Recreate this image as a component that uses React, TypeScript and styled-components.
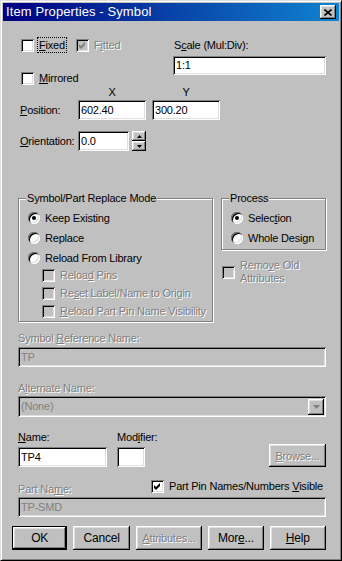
import React from "react";
import styled, { createGlobalStyle } from "styled-components";

const GlobalStyle = createGlobalStyle`
  html, body {
    margin: 0;
    padding: 0;
    background: #c0c0c0;
  }
  body {
    font-family: "Liberation Sans", Arial, sans-serif;
    font-size: 11px;
    letter-spacing: -0.2px;
    color: #000;
  }
  * {
    box-sizing: border-box;
  }
`;

const Window = styled.div`
  width: 342px;
  height: 561px;
  background: #c0c0c0;
  border: 1px solid;
  border-color: #dfdfdf #000 #000 #dfdfdf;
  box-shadow: inset 1px 1px #fff, inset -1px -1px #808080;
  padding: 2px;
  display: flex;
  flex-direction: column;
`;

const TitleBar = styled.div`
  height: 18px;
  flex: none;
  display: flex;
  align-items: center;
  justify-content: space-between;
  padding: 0 3px 0 3px;
  background: linear-gradient(90deg, #000080, #1084d0);
`;

const TitleText = styled.span`
  color: #fff;
  font-size: 13px;
  line-height: 18px;
  letter-spacing: 0.1px;
`;

const CloseButton = styled.div`
  width: 16px;
  height: 14px;
  display: flex;
  align-items: center;
  justify-content: center;
  background: #c0c0c0;
  box-shadow: inset -1px -1px #000, inset 1px 1px #fff, inset -2px -2px #808080,
    inset 2px 2px #dfdfdf;
`;

const Body = styled.div`
  display: flex;
  flex-direction: column;
  padding: 0 13px 0 15px;
`;

const TopSection = styled.div`
  display: grid;
  grid-template-columns: 155px 1fr;
  height: 65px;
`;

const LeftCol = styled.div`
  display: flex;
  flex-direction: column;
  gap: 17px;
  padding-top: 16px;
`;

const RightCol = styled.div`
  display: flex;
  flex-direction: column;
  padding-top: 18px;
`;

const CheckLine = styled.div`
  display: grid;
  grid-template-columns: 55px auto;
  padding-left: 3px;
`;

const CheckRow = styled.div<{ $height?: number; $indent?: number }>`
  display: flex;
  align-items: center;
  height: ${(p) => p.$height ?? 16}px;
  padding-left: ${(p) => p.$indent ?? 0}px;
`;

const Box = styled.span<{ $disabled?: boolean }>`
  flex: none;
  width: 13px;
  height: 13px;
  display: flex;
  align-items: center;
  justify-content: center;
  background: ${(p) => (p.$disabled ? "#c0c0c0" : "#fff")};
  box-shadow: inset 1px 1px #808080, inset -1px -1px #fff, inset 2px 2px #000,
    inset -2px -2px #dfdfdf;
`;

const RadioDot = styled.span<{ $on?: boolean }>`
  flex: none;
  width: 12px;
  height: 12px;
  border-radius: 50%;
  display: flex;
  align-items: center;
  justify-content: center;
  background: #fff;
  box-shadow: inset 1px 1px #808080, inset -1px -1px #fff, inset 2px 2px #000,
    inset -2px -2px #dfdfdf;

  &::after {
    content: "";
    width: 4px;
    height: 4px;
    border-radius: 50%;
    background: ${(p) => (p.$on ? "#000" : "transparent")};
  }
`;

const Text = styled.span<{ $disabled?: boolean; $gap?: number }>`
  line-height: 13px;
  white-space: nowrap;
  margin-left: ${(p) => p.$gap ?? 0}px;
  color: ${(p) => (p.$disabled ? "#808080" : "#000")};
  text-shadow: ${(p) => (p.$disabled ? "1px 1px 0 #fff" : "none")};
`;

const Focus = styled.span`
  outline: 1px dotted #000;
  outline-offset: 1px;
`;

const Field = styled.div<{ $width?: number; $height?: number; $disabled?: boolean }>`
  width: ${(p) => (p.$width ? `${p.$width}px` : "100%")};
  height: ${(p) => p.$height ?? 20}px;
  flex: none;
  display: flex;
  align-items: center;
  padding: 0 2px 0 3px;
  background: ${(p) => (p.$disabled ? "#c0c0c0" : "#fff")};
  color: ${(p) => (p.$disabled ? "#808080" : "#000")};
  box-shadow: inset 1px 1px #808080, inset -1px -1px #fff, inset 2px 2px #000,
    inset -2px -2px #dfdfdf;
  white-space: nowrap;
  line-height: 13px;
`;

const AxisRow = styled.div`
  display: grid;
  grid-template-columns: 60px 68px 6px 68px;
  height: 13px;
  line-height: 13px;
  text-align: center;
`;

const FormRow = styled.div<{ $top: number }>`
  display: grid;
  grid-template-columns: 60px 68px 6px 68px;
  align-items: center;
  height: 20px;
  margin-top: ${(p) => p.$top}px;
`;

const RowLabel = styled.span`
  padding-left: 2px;
  line-height: 13px;
`;

const SpinRow = styled.div`
  display: flex;
  align-items: center;
`;

const Spinner = styled.div`
  display: flex;
  flex-direction: column;
  margin-left: 3px;
  width: 16px;
  height: 20px;
`;

const RaisedSmall = styled.div<{ $height: number }>`
  height: ${(p) => p.$height}px;
  display: flex;
  align-items: center;
  justify-content: center;
  background: #c0c0c0;
  box-shadow: inset -1px -1px #000, inset 1px 1px #fff, inset -2px -2px #808080,
    inset 2px 2px #dfdfdf;
`;

const GroupsRow = styled.div`
  display: flex;
  gap: 8px;
  margin-top: 47px;
  align-items: flex-start;
`;

const Group = styled.div<{ $width: number }>`
  position: relative;
  width: ${(p) => p.$width}px;
  border: 1px solid #808080;
  box-shadow: inset 1px 1px #fff, 1px 1px #fff;
  padding: 9px 0 1px 9px;
  display: flex;
  flex-direction: column;
`;

const GroupTitle = styled.span`
  position: absolute;
  left: 7px;
  top: -7px;
  padding: 0 1px 0 1px;
  background: #c0c0c0;
  line-height: 13px;
`;

const SubList = styled.div`
  display: flex;
  flex-direction: column;
  margin-top: -2px;
`;

const SideCol = styled.div`
  display: flex;
  flex-direction: column;
`;

const RemoveRow = styled.div`
  display: flex;
  align-items: center;
  margin-top: 9px;
  padding-left: 1px;
`;

const FieldLabel = styled(Text)<{ $top: number }>`
  display: block;
  margin-top: ${(p) => p.$top}px;
`;

const FieldWrap = styled.div<{ $top: number }>`
  margin-top: ${(p) => p.$top}px;
`;

const ComboArrow = styled.div`
  margin-left: auto;
  width: 16px;
  height: 16px;
  display: flex;
  align-items: center;
  justify-content: center;
  background: #c0c0c0;
  box-shadow: inset -1px -1px #000, inset 1px 1px #fff, inset -2px -2px #808080,
    inset 2px 2px #dfdfdf;
`;

const NameRow = styled.div`
  display: grid;
  grid-template-columns: 89px 10px 28px 1fr 57px;
  grid-template-rows: 13px 20px;
  row-gap: 3px;
  margin-top: 14px;
`;

const BrowseCell = styled.div`
  grid-column: 5;
  grid-row: 1 / 3;
  align-self: start;
  margin-top: 13px;
`;

const PartRow = styled.div`
  display: grid;
  grid-template-columns: 133px auto;
  height: 29px;
`;

const PartLabel = styled(Text)`
  align-self: end;
`;

const PartCheck = styled.div`
  display: flex;
  align-items: center;
  height: 16px;
  margin-top: 11px;
`;

const ButtonRow = styled.div`
  display: flex;
  gap: 6px;
  margin: 9px 0 0 -6px;
`;

const Button = styled.div<{ $width: number; $height?: number; $default?: boolean; $disabled?: boolean; $small?: boolean }>`
  width: ${(p) => p.$width}px;
  height: ${(p) => p.$height ?? 24}px;
  display: flex;
  align-items: center;
  justify-content: center;
  background: #c0c0c0;
  color: ${(p) => (p.$disabled ? "#808080" : "#000")};
  text-shadow: ${(p) => (p.$disabled ? "1px 1px 0 #fff" : "none")};
  font-size: ${(p) => (p.$small ? 11 : 12)}px;
  box-shadow: ${(p) =>
    p.$default
      ? "inset 1px 1px #000, inset -1px -1px #000, inset -2px -2px #000, inset 2px 2px #fff, inset -3px -3px #808080, inset 3px 3px #dfdfdf"
      : "inset -1px -1px #000, inset 1px 1px #fff, inset -2px -2px #808080, inset 2px 2px #dfdfdf"};
`;

const Check = ({ color = "#000" }: { color?: string }) => (
  <svg width="7" height="7" viewBox="0 0 7 7">
    <path d="M0 2 L2 4 L6 0 L6 3 L2 7 L0 5 Z" fill={color} />
  </svg>
);

const Tri = ({ up, color = "#000" }: { up?: boolean; color?: string }) => (
  <svg width="5" height="3" viewBox="0 0 5 3">
    <path d={up ? "M2.5 0 L5 3 L0 3 Z" : "M0 0 L5 0 L2.5 3 Z"} fill={color} />
  </svg>
);

export default function App() {
  return (
    <Window>
      <GlobalStyle />
      <TitleBar>
        <TitleText>Item Properties - Symbol</TitleText>
        <CloseButton>
          <svg width="8" height="7" viewBox="0 0 8 7">
            <path d="M0.5 0.5 L7.5 6.5 M7.5 0.5 L0.5 6.5" stroke="#000" strokeWidth="1.6" />
          </svg>
        </CloseButton>
      </TitleBar>
      <Body>
        <TopSection>
          <LeftCol>
            <CheckLine>
              <CheckRow>
                <Box />
                <Text $gap={5}>
                  <Focus>
                    <u>F</u>ixed
                  </Focus>
                </Text>
              </CheckRow>
              <CheckRow>
                <Box $disabled>
                  <Check color="#808080" />
                </Box>
                <Text $gap={5} $disabled>
                  F<u>i</u>tted
                </Text>
              </CheckRow>
            </CheckLine>
            <CheckRow $indent={3}>
              <Box />
              <Text $gap={5}>
                <u>M</u>irrored
              </Text>
            </CheckRow>
          </LeftCol>
          <RightCol>
            <Text $gap={1}>
              S<u>c</u>ale (Mul:Div):
            </Text>
            <FieldWrap $top={4}>
              <Field $height={19}>1:1</Field>
            </FieldWrap>
          </RightCol>
        </TopSection>

        <AxisRow>
          <span />
          <span>X</span>
          <span />
          <span>Y</span>
        </AxisRow>
        <FormRow $top={1}>
          <RowLabel>
            <u>P</u>osition:
          </RowLabel>
          <Field>602.40</Field>
          <span />
          <Field>300.20</Field>
        </FormRow>
        <FormRow $top={11}>
          <RowLabel>
            <u>O</u>rientation:
          </RowLabel>
          <SpinRow>
            <Field $width={51}>0.0</Field>
            <Spinner>
              <RaisedSmall $height={10}>
                <Tri up />
              </RaisedSmall>
              <RaisedSmall $height={10}>
                <Tri />
              </RaisedSmall>
            </Spinner>
          </SpinRow>
        </FormRow>

        <GroupsRow>
          <Group $width={195}>
            <GroupTitle>Symbol/Part Replace Mode</GroupTitle>
            <CheckRow $height={20}>
              <RadioDot $on />
              <Text $gap={5}>Keep Existing</Text>
            </CheckRow>
            <CheckRow $height={20}>
              <RadioDot />
              <Text $gap={5}>Replace</Text>
            </CheckRow>
            <CheckRow $height={20}>
              <RadioDot />
              <Text $gap={5}>Reload From Library</Text>
            </CheckRow>
            <SubList>
              <CheckRow $height={18} $indent={14}>
                <Box $disabled />
                <Text $gap={5} $disabled>
                  Reloa<u>d</u> Pins
                </Text>
              </CheckRow>
              <CheckRow $height={18} $indent={14}>
                <Box $disabled />
                <Text $gap={5} $disabled>
                  Re<u>s</u>et Label/Name to Origin
                </Text>
              </CheckRow>
              <CheckRow $height={18} $indent={14}>
                <Box $disabled />
                <Text $gap={5} $disabled>
                  <u>R</u>eload Part Pin Name Visibility
                </Text>
              </CheckRow>
            </SubList>
          </Group>
          <SideCol>
            <Group $width={105}>
              <GroupTitle>Process</GroupTitle>
              <CheckRow $height={20}>
                <RadioDot $on />
                <Text $gap={5}>
                  Selec<u>t</u>ion
                </Text>
              </CheckRow>
              <CheckRow $height={20}>
                <RadioDot />
                <Text $gap={5}>Whole Design</Text>
              </CheckRow>
            </Group>
            <RemoveRow>
              <Box $disabled />
              <Text $gap={5} $disabled>
                Remo<u>v</u>e Old
                <br />
                Attributes
              </Text>
            </RemoveRow>
          </SideCol>
        </GroupsRow>

        <FieldLabel $top={10} $disabled>
          Symbol <u>R</u>eference Name:
        </FieldLabel>
        <FieldWrap $top={2}>
          <Field $disabled>TP</Field>
        </FieldWrap>

        <FieldLabel $top={15} $disabled>
          A<u>l</u>ternate Name:
        </FieldLabel>
        <FieldWrap $top={1}>
          <Field $disabled $height={21}>
            (None)
            <ComboArrow>
              <svg width="7" height="4" viewBox="0 0 7 4">
                <path d="M0 0 L7 0 L3.5 4 Z" fill="#808080" />
              </svg>
            </ComboArrow>
          </Field>
        </FieldWrap>

        <NameRow>
          <Text>
            <u>N</u>ame:
          </Text>
          <span />
          <Text>
            Mod<u>i</u>fier:
          </Text>
          <Field style={{ gridColumn: 1, gridRow: 2 }}>TP4</Field>
          <Field style={{ gridColumn: 3, gridRow: 2 }} />
          <BrowseCell>
            <Button $width={57} $height={23} $disabled $small>
              <u>B</u>rowse...
            </Button>
          </BrowseCell>
        </NameRow>

        <PartRow>
          <PartLabel $disabled>
            Part Na<u>m</u>e:
          </PartLabel>
          <PartCheck>
            <Box>
              <Check />
            </Box>
            <Text $gap={5}>
              Part Pin Names/Numbers <u>V</u>isible
            </Text>
          </PartCheck>
        </PartRow>
        <FieldWrap $top={1}>
          <Field $disabled>TP-SMD</Field>
        </FieldWrap>

        <ButtonRow>
          <Button $width={56} $default>
            OK
          </Button>
          <Button $width={57}>Cancel</Button>
          <Button $width={67} $disabled $small>
            <u>A</u>ttributes...
          </Button>
          <Button $width={56}>
            Mor<u>e</u>...
          </Button>
          <Button $width={57}>
            <u>H</u>elp
          </Button>
        </ButtonRow>
      </Body>
    </Window>
  );
}
